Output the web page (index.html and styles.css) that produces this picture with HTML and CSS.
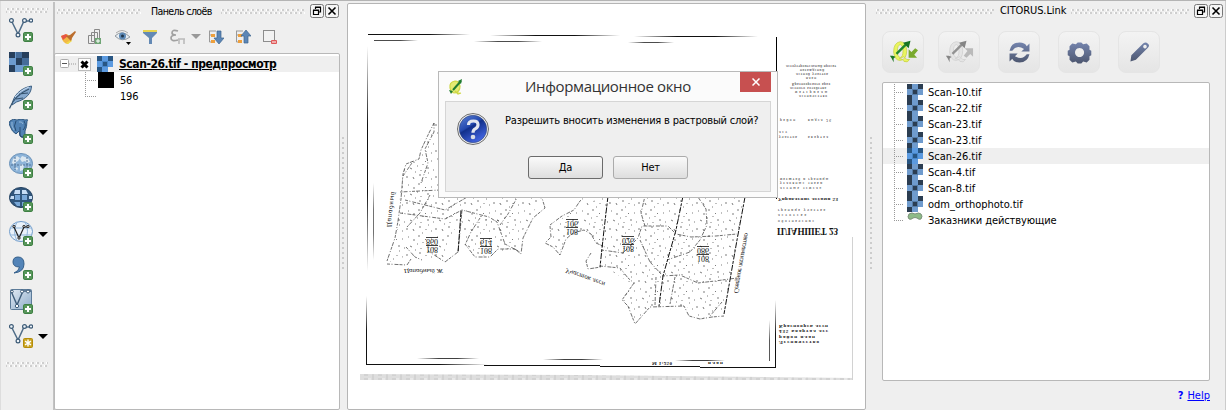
FILE: index.html
```html
<!DOCTYPE html>
<html lang="ru">
<head>
<meta charset="utf-8">
<title>CITORUS.Link</title>
<link rel="stylesheet" href="styles.css">
</head>
<body>
<svg class="defs" width="0" height="0">
  <defs>
    <linearGradient id="steel" x1="0" y1="0" x2="0" y2="1"><stop offset="0" stop-color="#7484ad"/><stop offset="1" stop-color="#4d5770"/></linearGradient>
    <linearGradient id="pale" x1="0" y1="0" x2="1" y2="1"><stop offset="0" stop-color="#e1eaf4"/><stop offset="1" stop-color="#8dabc9"/></linearGradient>
    <linearGradient id="ball" x1="0" y1="0" x2="0.6" y2="1"><stop offset="0" stop-color="#5d83d8"/><stop offset=".45" stop-color="#2449ae"/><stop offset=".5" stop-color="#12308b"/><stop offset="1" stop-color="#4264e0"/></linearGradient>
    <symbol id="plus" viewBox="0 0 10 10"><rect x=".5" y=".5" width="9" height="9" rx="1.3" fill="#58965b" stroke="#3e8043"/><path d="M5 2v6M2 5h6" stroke="#fff" stroke-width="2"/></symbol>
    <symbol id="vee" viewBox="0 0 24 24"><path d="M3 5L9 17L15 4H22" fill="none" stroke="#506d88" stroke-width="1.5"/><g fill="#eef3f7" stroke="#3c5a76" stroke-width="1.2"><circle cx="2.4" cy="3.5" r="1.9"/><circle cx="9" cy="18" r="1.9"/><circle cx="15.5" cy="3.5" r="1.9"/><circle cx="22" cy="3.5" r="1.7"/></g></symbol>
    <symbol id="raster" viewBox="0 0 16 16"><path fill="#6f9bcd" d="M0 0h16v16H0z"/><path fill="#2b3d51" d="M0 0h5v5H0zM11 0h5v5h-5zM0 11h5v5H0zM6 6h4v4H6z"/><path fill="#557ba5" d="M5 5h6v1H5zM5 10h6v1H5zM5 6h1v4H5zM10 6h1v4h-1z"/><path fill="#fff" d="M11 11h5v5h-5z"/></symbol>
    <symbol id="raster-on" viewBox="0 0 16 16"><path fill="#5b9ae0" d="M0 0h16v16H0z"/><path fill="#285683" d="M0 0h5v5H0zM11 0h5v5h-5zM0 11h5v5H0zM6 6h4v4H6z"/><path fill="#4685c8" d="M5 5h6v1H5zM5 10h6v1H5zM5 6h1v4H5zM10 6h1v4h-1z"/><path fill="#efefef" d="M11 11h5v5h-5z"/></symbol>
    <symbol id="restore" viewBox="0 0 14 14"><rect x=".5" y=".5" width="13" height="13" rx="2" fill="#f5f5f5" stroke="#777"/><path d="M5.500 5V3.500h5V8H9M3.500 6.500h5v4h-5zM5 3h6M3 6h6" fill="none" stroke="#000" stroke-width="1.2"/></symbol>
    <symbol id="close" viewBox="0 0 14 14"><rect x=".5" y=".5" width="13" height="13" rx="2" fill="#f5f5f5" stroke="#777"/><path d="M3.500 3.500l7 7m0-7l-7 7" stroke="#000" stroke-width="1.6"/></symbol>
    <pattern id="speck" width="29" height="26" patternUnits="userSpaceOnUse"><path d="M2 3h1m5 2v2m4-5h2m5 3l1 1m5-1h1M4 12l2 1m5-3h1m3 4v1m6-3h2m4 2h1M1 20v2m6-1l1 2m5-4h2m5 2v1m5 1h1m-10 2h1M17 8v1m-8 7h1m12 1h1" stroke="#444" stroke-width=".7" fill="none"/></pattern>
    <pattern id="band" width="14" height="6" patternUnits="userSpaceOnUse"><path fill="#dedede" d="M0 0h14v6H0z"/><path fill="#d2d2d2" d="M0 0h4v4H0zM8 0h2v6H8z"/><path fill="#e8e8e8" d="M4 0h3v2H4z"/></pattern>
    <linearGradient id="fade"><stop offset="0" stop-color="#111"/><stop offset=".6" stop-color="#111"/><stop offset="1" stop-color="#111" stop-opacity="0"/></linearGradient>
    <linearGradient id="both"><stop offset="0" stop-color="#111" stop-opacity="0"/><stop offset=".35" stop-color="#111"/><stop offset=".65" stop-color="#111"/><stop offset="1" stop-color="#111" stop-opacity="0"/></linearGradient>
    <linearGradient id="down" x2="0" y2="1"><stop offset="0" stop-color="#111" stop-opacity="0"/><stop offset=".5" stop-color="#111"/><stop offset="1" stop-color="#111"/></linearGradient>
    <linearGradient id="mid" x2="0" y2="1"><stop offset="0" stop-color="#111" stop-opacity="0"/><stop offset=".35" stop-color="#111"/><stop offset=".65" stop-color="#111"/><stop offset="1" stop-color="#111" stop-opacity="0"/></linearGradient>
  </defs>
</svg>
<div class="app">
  <nav class="tools">
    <div class="grip"></div>
    <div class="tool"><svg viewBox="0 0 24 24"><use href="#vee" width="24" height="24"/></svg><svg class="badge"><use href="#plus"/></svg></div>
    <div class="tool"><svg viewBox="0 0 24 24"><path fill="#6d9bce" d="M0 1h20v20H0z"/><path fill="#273f5c" d="M0 1h6v6H0zM13 1h7v6h-7zM7 7h6v7H7zM0 14h6v7H0z"/><path fill="#456c99" d="M7 1h6v6H7zM13 7h7v7h-7z"/></svg><svg class="badge"><use href="#plus"/></svg></div>
    <div class="tool"><svg viewBox="0 0 24 24"><path d="M3 20C4 11 11 3 22.500 1c0 7-5 13-15 16z" fill="#86a9cf" stroke="#3e6184"/><path d="M.5 23.500C4 14 11 8 20 4M7 14l7-1m-4-4l9-1" fill="none" stroke="#35536f" stroke-width="1.2"/><path d="M6 12C10 7 15 4 20 2" stroke="#c9dcf0" fill="none"/></svg><svg class="badge"><use href="#plus"/></svg></div>
    <div class="tool"><svg viewBox="0 0 24 24"><path d="M1 2q3-3 7-1 4-2 8 0 4-1 2 1 0 6-2 10v5q-3 3-5 0l-1-5-3 3q-4-2-6-8Q-1 4 1 2z" fill="#5283b5" stroke="#31587f"/><path d="M7 2q-3 5 0 10m8-10q3 5-1 9M11 8v8q0 2 3 2" fill="none" stroke="#284d73"/><path d="M3 3q-1 4 2 8M10 3q3-1 4 2" fill="none" stroke="#91b6d8"/></svg><svg class="badge"><use href="#plus"/></svg><i class="drop"></i></div>
    <div class="tool"><svg viewBox="0 0 24 24"><ellipse cx="12" cy="10.500" rx="11.500" ry="10" fill="#8db4d9" stroke="#6991b8"/><path d="M4 6l4-3 3 2-2 3-2 1-1 3-3-2zM13 3l6 2 2 4-3 1-2-2-3 1-2-3zM11 11l4 1-1 5-3 1zM6 14l3 1-1 3zM17 13l3 1-2 3z" fill="#dbe7f0"/><path d="M2 12h20M6 4v13M18 4v12" stroke="#4f7196" stroke-dasharray="2 1"/></svg><svg class="badge"><use href="#plus"/></svg><i class="drop"></i></div>
    <div class="tool"><svg viewBox="0 0 24 24"><ellipse cx="12" cy="10.500" rx="11.500" ry="10" fill="#31567c" stroke="#203f5f"/><path fill="#c6ddf5" d="M6 3h5v4H5zM13 3h4l2 4h-6zM2 9h3v3H1zM20 9h3v3h-3z"/><path fill="#78a7d7" d="M6 8h5v5H6zM13 8h5v5h-5zM5 15h6v4H8zM13 15h6l-3 4h-3z"/></svg><svg class="badge"><use href="#plus"/></svg></div>
    <div class="tool"><svg viewBox="0 0 24 24"><ellipse cx="12" cy="10.500" rx="11.500" ry="10" fill="#eaf2fa" stroke="#6f9bca"/><path d="M1 7h22M1 14h22M8 1Q3 10 8 20M16 1q5 9 0 19" fill="none" stroke="#90b5da"/><path d="M5 6l5 11 5-11h4" fill="none" stroke="#222" stroke-width="1.2"/><g fill="#bbb" stroke="#111" stroke-width=".8"><circle cx="5" cy="5.500" r="1.200"/><circle cx="10" cy="17" r="1.200"/><circle cx="15" cy="5.500" r="1.200"/><circle cx="19" cy="5.500" r="1.200"/></g></svg><svg class="badge"><use href="#plus"/></svg><i class="drop"></i></div>
    <div class="tool"><svg viewBox="0 0 24 24"><path d="M5 18q5-2 5.500-6Q4 12 4 7q0-5 5-5 6 0 6 7 0 8-10 9z" fill="#5384b8" stroke="#345f8a"/></svg><svg class="badge"><use href="#plus"/></svg></div>
    <div class="tool"><svg viewBox="0 0 24 24"><rect x="1.500" y=".5" width="21" height="20" rx="1" fill="url(#pale)" stroke="#5c7b99"/><path d="M2 2l6 14L14 2h8" fill="none" stroke="#405e7b" stroke-width="1.400"/><g fill="#fff" stroke="#405e7b"><circle cx="8" cy="17" r="1.700"/><circle cx="13" cy="2.500" r="1.500"/><circle cx="19" cy="2.500" r="1.500"/><circle cx="3" cy="2.500" r="1.300"/></g></svg><svg class="badge"><use href="#plus"/></svg></div>
    <div class="tool"><svg viewBox="0 0 24 24"><use href="#vee" width="24" height="24"/></svg><svg class="badge" viewBox="0 0 10 10"><rect x=".5" y=".5" width="9" height="9" rx="1" fill="#c9a322" stroke="#b48d09"/><path d="M5 1.500v7M2 3.200l6 3.600M2 6.800l6-3.600" stroke="#fff" stroke-width="1.400"/></svg><i class="drop"></i></div>
    <div class="grip grip-end"></div>
  </nav>

  <section class="layers">
    <header class="dock-title"><span class="grip"></span><span class="t-layers">Панель слоёв</span><span class="grip"></span><svg><use href="#restore"/></svg><svg><use href="#close"/></svg></header>
    <div class="layer-tools">
      <svg viewBox="0 0 16 16"><path d="M1 7l6-2 5 5-4 5q-5 0-7-8z" fill="#f2b944"/><path d="M1 7l5-2 2 2-5 4z" fill="#e75645"/><path d="M6 14l5-3 1 1-4 3z" fill="#eedb49"/><path d="M6 7l5 5 1-3 4-6-1-1-5 4z" fill="#bb6e2e"/></svg>
      <svg viewBox="0 0 16 16"><path d="M1.500 6.500h6v8h-6zM4.500 3.500h6v9h-6zM7.500.5h5v10h-5z" fill="#eee" stroke="#888"/><path d="M8 9h6v6H8z" fill="#6fa575"/><path d="M11 10v4m-2-2h4" stroke="#fff"/></svg>
      <svg class="eye" viewBox="0 0 18 16"><path d="M1 7q7-7 15 1q-8 6-15-1z" fill="#e7edf2" stroke="#929aa1"/><circle cx="8.500" cy="7" r="3.500" fill="#5c88b5"/><circle cx="8.500" cy="7" r="1.500" fill="#1f3448"/><path d="M2 4q6-5 12 0" stroke="#aaa" fill="none"/><path d="M12 13h5l-2.500 3z"/></svg>
      <svg viewBox="0 0 16 16"><path d="M1 1h14v3L10 9v6H7V9L1 4z" fill="#6389b4"/><path d="M1 1h14v2H1z" fill="#e7d44f"/></svg>
      <svg class="eps" viewBox="0 0 16 16"><path d="M8 2Q2 0 2 4q0 2 4 2-5 0-5 3 0 4 7 2" fill="none" stroke="#a1a1a1" stroke-width="1.700"/><path d="M9 15v-5h5v5M8 10h7" fill="none" stroke="#bbb" stroke-width="1.600"/></svg>
      <i class="drop gray"></i>
      <svg viewBox="0 0 16 16"><path d="M1 2h7M1.500 2v11H6M2 6h4" stroke="#999" fill="none"/><path d="M3 5h4v3H3zM3 11h4v3H3z" fill="#eea03d"/><path d="M9 2h4v7h3l-5 6-5-6h3z" fill="#5c86b6" stroke="#3e658f" stroke-width=".7"/></svg>
      <svg viewBox="0 0 16 16"><path d="M1 2h7M1.500 2v11H6M2 6h4" stroke="#999" fill="none"/><path d="M3 5h4v3H3zM3 11h4v3H3z" fill="#eea03d"/><path d="M9 14h4V7h3l-5-6-5 6h3z" fill="#5c86b6" stroke="#3e658f" stroke-width=".7"/></svg>
      <svg viewBox="0 0 16 16"><rect x="1.500" y="1.500" width="11" height="11" fill="#f2f2f2" stroke="#8d8d8d"/><rect x="9" y="11" width="6" height="4" rx="1" fill="#df5858"/><path d="M10 13h4" stroke="#fff"/></svg>
    </div>
    <div class="tree">
      <div class="row selected"><svg class="expander" viewBox="0 0 38 16"><path d="M13 8h8" stroke="#999" stroke-dasharray="1 1"/><rect x="4.500" y="3.500" width="8" height="8" rx="1" fill="#fff" stroke="#aaa"/><path d="M6 7.500h5" stroke="#555"/><rect x="22.500" y="2.500" width="12" height="12" fill="#fff" stroke="#bbb"/><path d="M25.500 5.500l6 6m0-6l-6 6" stroke="#000" stroke-width="3"/></svg><svg class="ric"><use href="#raster-on"/></svg><b>Scan-26.tif - предпросмотр</b></div>
      <div class="row value"><i class="swatch"></i><span>56</span></div>
      <div class="row value last"><i class="swatch blank"></i><span>196</span></div>
    </div>
  </section>
  <div class="split"><i></i></div>

  <main class="map">
    <svg viewBox="348 4 517 404" width="517" height="404">
      <g>
        <rect x="368" y="34" width="102" height="1" fill="url(#fade)"/><rect x="490" y="35" width="130" height="1" fill="url(#both)"/><rect x="634" y="36" width="124" height="1" fill="url(#both)"/>
        <g opacity=".75"><rect x="374" y="40" width="44" height="1" fill="url(#fade)"/><rect x="474" y="41" width="68" height="1" fill="url(#both)"/><rect x="628" y="42" width="46" height="1" fill="url(#both)"/></g>
        <rect x="367" y="46" width="1" height="225" fill="url(#mid)"/><rect x="366" y="296" width="1" height="69" fill="url(#down)"/><rect x="373" y="183" width="1" height="77" fill="url(#mid)" opacity=".6"/>
        <rect x="776" y="37" width="1" height="162" fill="#000"/><rect x="775" y="300" width="1" height="68" fill="url(#down)"/><rect x="769" y="320" width="1" height="41" fill="url(#down)" opacity=".7"/>
        <rect x="366" y="364" width="122" height="1" fill="url(#fade)"/><path d="M484 365.500H600M600 366.500H700M700 367.500H776" stroke="#111" fill="none"/>
        <g opacity=".8"><rect x="417" y="358" width="62" height="1" fill="url(#both)"/><rect x="543" y="359" width="60" height="1" fill="url(#both)"/><rect x="675" y="360" width="50" height="1" fill="url(#both)"/></g>
        <path d="M360 374l220 1 273 3v2H360z" fill="url(#band)"/><path d="M852.500 237V380" stroke="#d2d2d2"/>
      </g>
      <g fill="url(#speck)">
        <path d="M434 123L420 160 403 165 396 240 390 262 410 255 445 260 461 210 500 225 500 123z"/>
        <path d="M461 212l35 8 4-24h30l10 5-15 25-10 23-34 7-18-12z"/>
        <path d="M552 225l30-20 28-10-5 55-20-18-18 3-8 18-9-15z"/>
        <path d="M608 196H745L724 314 700 318 686 306 650 307 635 323 622 300 632 284 602 265z"/>
      </g>
      <g class="bounds">
        <path d="M434 123l-6 12-7 15-2 9-13 5-3 10-2 25-3 22-3 17-8 23M387 264l20 1 4-6M406 247l9 10 7 3M428 251l17 11 13-10 2-20 2-22M400 213l45 6 17-9 27 7 8 5 8 22 15 8M465 244l10 13 15 0 8-8h17l6 5 2-16 10-20 12-10-3-10-9-2M430 195l-10 18-13 14M480 218l-9 14-6 13M500 225l8-11 10-18"/>
        <path d="M434 123v9l-9 17 3 14-7 20M403 176l11-16M440 190l-40 2M405 200l40 10 24-14M550 226l1 11-6 6 8 4 7 8 6-16 7-6 11-3 7 4 5 9 9 4M550 225l12-9 12-6 6-9 6-5M591 253l-5 8 2 8 13-2"/>
        <path d="M601 250l8 1 14 2 15-15 4-12h26l8 8 15 3 25-1 21-2M640 240l10 22 12 13M662 276l18-1 18 8 17-2 22-3M667 260l23-8 10-12 7-15-1-16-8-12M645 226l-4-13 4-17M656 277l-1 28M620 268l8 10 6 5-12 17 6 6 7 18 15-17 34-1 5 10 11 3 12-2 12-1M600 266l20 2M675 277l-5 27M722 302l-12 14"/>
        <path class="ride" d="M608 196l-4 34-4 37M683 196l-7 34-13 46-4 30M745 197l-8 43-13 74M461 211l-3 42"/>
      </g>
      <g class="flip">
        <g class="lot"><text x="426" y="-239">860</text><text x="426" y="-247">108</text><text x="480" y="-240">614</text><text x="480" y="-248">108</text><text x="566" y="-221">106</text><text x="566" y="-229">108</text><text x="622" y="-238">026</text><text x="622" y="-246">108</text><text x="697" y="-248">086</text><text x="697" y="-256">108</text></g>
        <text class="sheet" x="777" y="-228" textLength="61" lengthAdjust="spacingAndGlyphs">ПЛАНШЕТ 23</text>
        <g class="scrawl"><text x="404" y="-269" textLength="39">Цападный Ж</text><text transform="translate(387 -227) rotate(83)" textLength="36">Цападный</text><text transform="translate(566 -268) rotate(-20)" textLength="42">Участок лесн</text><text transform="translate(734 -293) rotate(80)" textLength="61">Северное лесничество</text></g>
        <g class="tiny"><text x="786" y="-65" textLength="50">лесоустроительный проект</text><text x="800" y="-69" textLength="24">насаждений</text><text x="796" y="-73" textLength="32">лесной участок</text><text x="806" y="-77" textLength="10">план</text><text x="792" y="-83" textLength="38">Красноярского края</text><text x="790" y="-87" textLength="36">лесного хозяйства</text><text x="795" y="-91" textLength="32">материалы</text><text x="799" y="-95" textLength="28">лесничество</text>
        <text x="780" y="-119" textLength="15">район</text><text x="808" y="-119" textLength="23">выдел 26</text><text x="779" y="-131" textLength="8">лес</text><text x="779" y="-136" textLength="18">участок</text><text x="808" y="-136" textLength="20">квартал</text>
        <text x="780" y="-178" textLength="48">масштаб и границы</text><text x="780" y="-182" textLength="42">условные знаки</text><text x="780" y="-187" textLength="41">лесных земель</text><text x="778" y="-209" textLength="47">граница участка</text><text x="778" y="-214" textLength="28">лесосека</text><text x="778" y="-220" textLength="36">обозначение</text></g>
        <g class="note"><text x="778" y="-198" textLength="60">Управление лесами 53</text><text x="779" y="-325" textLength="49">Красноярск лесн</text><text x="779" y="-330" textLength="49">435 квартал лес</text><text x="779" y="-336" textLength="36">район план</text><text x="779" y="-341" textLength="40">Лесничество</text><text x="652" y="-362" textLength="20">М 1:250</text><text x="708" y="-362" textLength="15">план</text></g>
      </g>
    </svg>
    <div class="dialog">
      <div class="dlg-title">
        <svg class="q" viewBox="0 0 16 16"><path d="M7 2q-6 1-5 7 1 5 5 5 5-1 5-7-1-5-5-5zM7 12l3 3 3-1" fill="#e3ea72" stroke="#cdd643" stroke-width="1.200"/><path d="M5 11L13 2" fill="none" stroke="#1f7b2f" stroke-width="2"/><path d="M10 2l4-2-1 5zM1 11l4 1-2 3z" fill="#1f7b2f"/></svg>
        <span>Информационное окно</span>
        <button><svg viewBox="0 0 8 8"><path d="M.5.500l7 7m0-7l-7 7" stroke="#fff" stroke-width="1.500"/></svg></button>
      </div>
      <div class="dlg-body">
        <div class="message"><svg viewBox="0 0 32 32"><circle cx="16" cy="16" r="15.500" fill="#eee" stroke="#6d6d6d"/><circle cx="16" cy="16" r="13.700" fill="url(#ball)" stroke="#334678" stroke-width=".6"/><path d="M11.500 12q0-4 5-4 4.500 0 4.500 3.700 0 2.500-2.500 4-2.500 1.300-2.500 4" fill="none" stroke="#e3e7f0" stroke-width="3.200"/><circle cx="16" cy="24" r="2.300" fill="#d9dde6"/></svg><span>Разрешить вносить изменения в растровый слой?</span></div>
        <div class="actions"><button class="default">Да</button><button>Нет</button></div>
      </div>
    </div>
  </main>
  <div class="split right"><i></i></div>

  <section class="link">
    <header class="dock-title"><span class="grip"></span><span class="t-link">CITORUS.Link</span><span class="grip"></span><svg><use href="#restore"/></svg><svg><use href="#close"/></svg></header>
    <div class="link-tools">
      <button><svg viewBox="0 0 32 32"><path d="M13 5q-7 1-7 11 1 9 7 9 7-1 7-11-1-9-7-9zm0 3q3 1 3 7 0 6-3 7-3-1-3-7 0-6 3-7zM12 23q4 0 5 3 4 2 6-2l-3 0-3-3z" fill="#e9f55e" stroke="#c5cf4a" stroke-width=".8" fill-rule="evenodd"/><path d="M9 18L20 7" stroke="#21872c" stroke-width="2.500"/><path d="M16 6l8-2-2 8zM2 20l3 0 3 1-2 2 0 4-2-4z" fill="#187522"/><path d="M24 22v-9l3 3 4-4 3 2-4 5 3 3z" transform="translate(-2)" fill="#79a92d"/></svg></button>
      <button><svg viewBox="0 0 32 32"><path d="M13 5q-7 1-7 11 1 9 7 9 7-1 7-11-1-9-7-9zm0 3q3 1 3 7 0 6-3 7-3-1-3-7 0-6 3-7zM12 23q4 0 5 3 4 2 6-2l-3 0-3-3z" fill="#e4e4e4" stroke="#cfcfcf" stroke-width=".8" fill-rule="evenodd"/><path d="M9 18L20 7" stroke="#929292" stroke-width="2.500"/><path d="M16 6l8-2-2 8zM2 20l3 0 3 1-2 2 0 4-2-4z" fill="#858585"/><path d="M22 12h9v9l-3-3-4 4-3-2 4-5z" fill="#bababa"/></svg></button>
      <button><svg viewBox="0 0 32 32"><path d="M5 14q2-9 11-9 6 0 8 4l3-3v9h-9l3-3q-8-5-13 2zM27 18q-2 9-11 9-6 0-8-4l-3 3v-9h9l-3 3q8 5 13-2z" fill="url(#steel)"/></svg></button>
      <button><svg viewBox="0 0 32 32"><path d="M14 5h4l2 2 4-1 3 3v4l2 1v5l-2 1v4l-3 3-4-1-2 2h-4l-2-2-4 1-3-3v-4l-2-1v-5l2-1V9l3-3 4 1zM16 11a5 5 0 1 0 .1 0z" fill="url(#steel)" fill-rule="evenodd"/></svg></button>
      <button><svg viewBox="0 0 32 32"><path d="M7 19L20 6q3-2 5 0 3 2 0 5L12 24l-6 2zM22 7.500a2 2 0 1 0 .1 0z" fill="url(#steel)" fill-rule="evenodd"/></svg></button>
    </div>
    <div class="list">
      <div class="item"><svg><use href="#raster"/></svg><span>Scan-10.tif</span></div>
      <div class="item"><svg><use href="#raster"/></svg><span>Scan-22.tif</span></div>
      <div class="item"><svg><use href="#raster"/></svg><span>Scan-23.tif</span></div>
      <div class="item"><svg><use href="#raster"/></svg><span>Scan-23.tif</span></div>
      <div class="item current"><svg><use href="#raster-on"/></svg><span>Scan-26.tif</span></div>
      <div class="item"><svg><use href="#raster"/></svg><span>Scan-4.tif</span></div>
      <div class="item"><svg><use href="#raster"/></svg><span>Scan-8.tif</span></div>
      <div class="item"><svg><use href="#raster"/></svg><span>odm_orthophoto.tif</span></div>
      <div class="item last"><svg viewBox="0 0 16 16"><path d="M2 2q3-2 6 0 4-2 6 0 2 2 0 5-2 1-4-1-2-1-4 0-2 2-4 1Q0 5 2 2z" fill="#8dbb87" stroke="#7d927b"/></svg><span class="reserve">Заказники действующие</span></div>
    </div>
    <footer><b>?</b><a>Help</a></footer>
  </section>
</div>
</body>
</html>
```
FILE: styles.css
```css
* { box-sizing: border-box; }
body { margin: 0; background: #efefef; color: #000; font: 11px/16px "DejaVu Sans Condensed", "DejaVu Sans", sans-serif; font-stretch: condensed; }
.defs { display: block; height: 0; }
svg { display: block; flex: none; }
button { border: 0; padding: 0; font: inherit; color: #000; }
.app { display: grid; grid-template-columns: 53px 287px 7px 519px 16px 344px; width: 1226px; height: 410px; border-top: 1px solid #b4b4b4; overflow: hidden; }
.grip { height: 5px; background: linear-gradient(90deg, #fff 1px, #cfcfcf 1px 3px, transparent 3px) 0 0 / 5px 2px repeat-x, linear-gradient(90deg, #fff 1px, #cfcfcf 1px 3px, transparent 3px) 3px 3px / 5px 2px repeat-x; }

.tools { border-left: 1px solid #ddd; padding: 7px 0 0 5px; }
.tools > .grip { width: 42px; margin-bottom: 4px; }
.tools > .grip-end { margin-top: 5px; }
.tool { position: relative; height: 34px; padding-left: 3px; display: flex; }
.tool > svg:first-child { width: 24px; height: 24px; }
.tool .badge { position: absolute; left: 17px; top: 15px; width: 10px; height: 10px; }
.drop { width: 0; height: 0; border: 5px solid transparent; border-top-color: #000; border-bottom: 0; margin: 11px 0 0 5px; }

.layers { border-left: 2px solid #c2c2c2; margin-top: 1px; display: flex; flex-direction: column; }
.dock-title { display: flex; align-items: center; height: 18px; font-size: 10.500px; white-space: nowrap; }
.dock-title .grip { flex: 1; }
.dock-title svg { width: 14px; height: 14px; }
.layers .dock-title { padding: 0 0 0 2px; margin-right: 1px; }
.t-layers { width: 60px; margin: 0 10px; letter-spacing: -.6px; }
.dock-title .grip + svg { margin: 0 1px 0 5px; }
.layer-tools { display: flex; align-items: center; height: 33px; padding-left: 5px; gap: 11px; }
.layer-tools svg { width: 16px; height: 16px; }
.layer-tools svg.eye { width: 18px; margin-right: -1px; }
.layer-tools svg.eps { margin-left: 1px; }
.drop.gray { border-top-color: #999; margin: 0 -4px 0 -6px; }
.tree { flex: 1; background: #fff; border: 1px solid #b8b8b8; border-radius: 2px; margin-left: -1px; padding-top: 2px; }
.row { display: flex; height: 16px; line-height: 17px; align-items: center; }
.selected { background: #efefef; font-size: 12px; }
.expander { width: 38px; height: 16px; margin: 0 3px 0 1px; }
.ric { width: 16px; height: 16px; }
.row b { margin-left: 6px; letter-spacing: -.44px; text-decoration: underline; white-space: nowrap; }
.value { padding-left: 30px; }
.value::before { content: ""; width: 11px; height: 16px; margin-right: 2px; background: repeating-linear-gradient(#999 0 1px, transparent 1px 2px) 0 0 / 1px 100% no-repeat, repeating-linear-gradient(90deg, #999 0 1px, transparent 1px 2px) 0 8px / 11px 1px no-repeat; }
.value.last::before { background-size: 1px 8px, 11px 1px; }
.swatch { width: 16px; height: 16px; background: #000; margin-right: 6px; }
.swatch.blank { background: none; }
.value span { letter-spacing: -.2px; }

.split { padding: 136px 0 0 2px; }
.split i { display: block; width: 3px; height: 134px; background: linear-gradient(#ccc 2px, transparent 2px) 0 0 / 2px 5px repeat-y; }
.split.right { padding-left: 4px; }

.map { position: relative; margin-top: 2px; height: 407px; border: 1px solid #b5b5b5; background: #fff; border-radius: 2px; }
.bounds path { fill: none; stroke: #333; stroke-width: .7; stroke-dasharray: 3 1.500 1 2 4 1; }
.bounds .ride { stroke: #111; stroke-width: 1; stroke-dasharray: 6 1.500 3 1; }
.flip { transform: scale(1, -1); font-family: "Liberation Serif", serif; fill: #111; }
.lot { font-size: 8px; text-decoration: underline; }
.sheet { font-size: 10px; font-weight: bold; }
.scrawl { font-size: 7px; font-style: italic; }
.tiny { font-size: 3.500px; }
.note { font-size: 5px; font-weight: bold; }

.dialog { position: absolute; left: 90px; top: 67px; width: 340px; height: 127px; padding: 0 6px 6px; background: #fbfbfb; border: 1px solid #b9b9b9; }
.dlg-title { display: flex; height: 29px; font: 15px/29px "Open Sans", "Noto Sans", sans-serif; letter-spacing: -.36px; color: #333; }
.dlg-title .q { width: 16px; height: 16px; margin: 7px 0 0 3px; }
.dlg-title span { width: 167px; margin-left: 61px; white-space: nowrap; }
.dlg-title button { width: 31px; height: 20px; background: #c75050; margin-left: auto; display: grid; place-items: center; }
.dlg-title button svg { width: 8px; height: 8px; }
.dlg-body { height: 91px; background: #efefef; border: 1px solid #d5d5d5; padding: 11px 0 0 11px; }
.message { display: flex; height: 43px; white-space: nowrap; }
.message svg { width: 32px; height: 32px; }
.message span { margin-left: 16px; letter-spacing: -.2px; }
.actions { display: flex; gap: 10px; padding-left: 71px; }
.actions button { width: 75px; height: 23px; padding-top: 1px; border: 1px solid #ababab; border-radius: 3px; background: linear-gradient(#fafafa, #dedede); letter-spacing: -.2px; }
.actions .default { border-color: #6b6b6b; }

.link { border-right: 1px solid #ccc; display: flex; flex-direction: column; }
.link .dock-title { margin: 1px 2px 2px -6px; }
.t-link { width: 66px; margin: 0 5px 0 6px; font-size: 11px; letter-spacing: -.1px; }
.link-tools { display: flex; padding-top: 9px; gap: 18px; }
.link-tools button { width: 42px; height: 42px; border: 1px solid #e5e5e5; border-radius: 8px; background: linear-gradient(#f3f3f3, #e5e5e5); display: grid; place-items: center; }
.link-tools button + button { margin-left: -4px; }
.link-tools button + button + button { margin-left: 0; }
.link-tools svg { width: 30px; height: 30px; }
.link-tools button:nth-child(n+3) svg { width: 29px; height: 29px; }
.list { width: 328px; height: 299px; margin-top: 9px; background: #fff; border: 1px solid #b8b8b8; border-radius: 2px; padding-top: 1px; }
.item { display: flex; height: 16px; line-height: 16px; align-items: center; padding-left: 11px; white-space: nowrap; }
.item span { padding-top: 2px; }
.item::before { content: ""; width: 10px; height: 16px; margin-right: 3px; background: repeating-linear-gradient(#999 0 1px, transparent 1px 2px) 0 0 / 1px 100% no-repeat, repeating-linear-gradient(90deg, #999 0 1px, transparent 1px 2px) 0 8px / 10px 1px no-repeat; }
.item.last::before { background-size: 1px 8px, 10px 1px; }
.item svg { width: 16px; height: 16px; margin-right: 5px; }
.reserve { letter-spacing: -.1px; }
.current { background: #efefef; }
footer { display: flex; justify-content: flex-end; gap: 4px; padding: 7px 15px 0 0; color: #00f; }
footer a { text-decoration: underline; }
```
